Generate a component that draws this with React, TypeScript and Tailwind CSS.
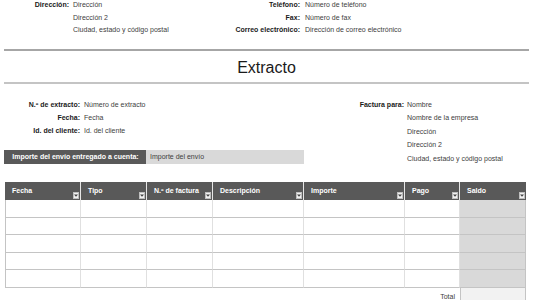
import React from "react";

const Row = ({ label, value, lw, gap, lh }: { label: string; value: string; lw: string; gap: string; lh: string }) => (
  <div className={`flex ${lh}`}>
    <div className={`${lw} shrink-0 text-right font-bold text-[#1a1a1a]`}>{label}</div>
    <div className={`${gap} text-[#404040] whitespace-nowrap`}>{value}</div>
  </div>
);

const Drop = () => (
  <div className="self-end mb-[1px] mr-[1px] w-[6px] h-[7px] bg-[#f2f2f2] border border-[#bfbfbf] flex items-center justify-center">
    <svg width="4" height="3" viewBox="0 0 4 3">
      <path d="M0 0.5 L4 0.5 L2 2.8 Z" fill="#404040" />
    </svg>
  </div>
);

export default function App() {
  const cols = ["Fecha", "Tipo", "N.º de factura", "Descripción", "Importe", "Pago", "Saldo"];
  return (
    <div
      className="w-[533px] h-[300px] overflow-hidden bg-white text-[7px]"
      style={{ fontFamily: '"Liberation Sans", Arial, sans-serif' }}
    >
      {/* Top info */}
      <div className="flex -mt-[1px] h-[50px]">
        <div className="w-[230px]">
          <Row label="Dirección:" value="Dirección" lw="w-[69px]" gap="ml-[4px]" lh="h-[12.5px] leading-[12.5px]" />
          <Row label="" value="Dirección 2" lw="w-[69px]" gap="ml-[4px]" lh="h-[12.5px] leading-[12.5px]" />
          <Row label="" value="Ciudad, estado y código postal" lw="w-[69px]" gap="ml-[4px]" lh="h-[12.5px] leading-[12.5px]" />
        </div>
        <div>
          <Row label="Teléfono:" value="Número de teléfono" lw="w-[70px]" gap="ml-[5px]" lh="h-[12.5px] leading-[12.5px]" />
          <Row label="Fax:" value="Número de fax" lw="w-[70px]" gap="ml-[5px]" lh="h-[12.5px] leading-[12.5px]" />
          <Row label="Correo electrónico:" value="Dirección de correo electrónico" lw="w-[70px]" gap="ml-[5px]" lh="h-[12.5px] leading-[12.5px]" />
        </div>
      </div>
      <div className="mx-[4px] h-[2px] bg-[#a6a6a6]" />
      <div className="h-[31px] flex items-center justify-center text-[16px] text-[#1a1a1a] pt-[2px]">Extracto</div>
      <div className="mx-[4px] h-[2px] bg-[#c4c4c4]" />

      {/* Statement info */}
      <div className="flex mt-[14px] h-[84px]">
        <div className="w-[304px]">
          <Row label="N.º de extracto:" value="Número de extracto" lw="w-[80px]" gap="ml-[4px]" lh="h-[13px] leading-[13px]" />
          <Row label="Fecha:" value="Fecha" lw="w-[80px]" gap="ml-[4px]" lh="h-[13px] leading-[13px]" />
          <Row label="Id. del cliente:" value="Id. del cliente" lw="w-[80px]" gap="ml-[4px]" lh="h-[13px] leading-[13px]" />
          <div className="flex mt-[13px] ml-[4px] h-[14px] leading-[14px]">
            <div className="w-[142px] bg-[#595959] text-white font-bold text-center pl-[1px]">
              Importe del envío entregado a cuenta:
            </div>
            <div className="flex-1 bg-[#d9d9d9] text-[#404040] pl-[4px]">Importe del envío</div>
          </div>
        </div>
        <div className="-mt-[0.5px]">
          <Row label="Factura para:" value="Nombre" lw="w-[100px]" gap="ml-[3px]" lh="h-[13.5px] leading-[13.5px]" />
          <Row label="" value="Nombre de la empresa" lw="w-[100px]" gap="ml-[3px]" lh="h-[13.5px] leading-[13.5px]" />
          <Row label="" value="Dirección" lw="w-[100px]" gap="ml-[3px]" lh="h-[13.5px] leading-[13.5px]" />
          <Row label="" value="Dirección 2" lw="w-[100px]" gap="ml-[3px]" lh="h-[13.5px] leading-[13.5px]" />
          <Row label="" value="Ciudad, estado y código postal" lw="w-[100px]" gap="ml-[3px]" lh="h-[13.5px] leading-[13.5px]" />
        </div>
      </div>

      {/* Table */}
      <div className="ml-[5px]">
        <div className="grid grid-cols-[76px_66px_66px_91px_101px_55px_66px]">
          {cols.map((c, i) => (
            <div
              key={c}
              className={`h-[18px] bg-[#595959] flex justify-between ${i < cols.length - 1 ? "border-r border-[#e6e6e6]" : ""}`}
            >
              <span className="text-white font-bold pl-[7px] pt-[4px] leading-[9px]">{c}</span>
              <Drop />
            </div>
          ))}
          {Array.from({ length: 5 }).map((_, r) =>
            cols.map((c, i) => (
              <div
                key={`${r}-${c}`}
                className={`h-[17.6px] border-b border-[#c4c4c4] ${i === 0 ? "border-l border-l-[#c4c4c4]" : ""} ${
                  i === cols.length - 1 ? "bg-[#d9d9d9] border-r border-r-[#c4c4c4]" : "bg-white border-r border-r-[#e0e0e0]"
                }`}
              />
            ))
          )}
          <div className="col-span-6 h-[14px] text-right pr-[5px] pt-[4px] leading-[9px] text-[#404040]">Total</div>
          <div className="h-[14px] bg-[#f2f2f2] border-x border-[#c4c4c4]" />
        </div>
      </div>
    </div>
  );
}
